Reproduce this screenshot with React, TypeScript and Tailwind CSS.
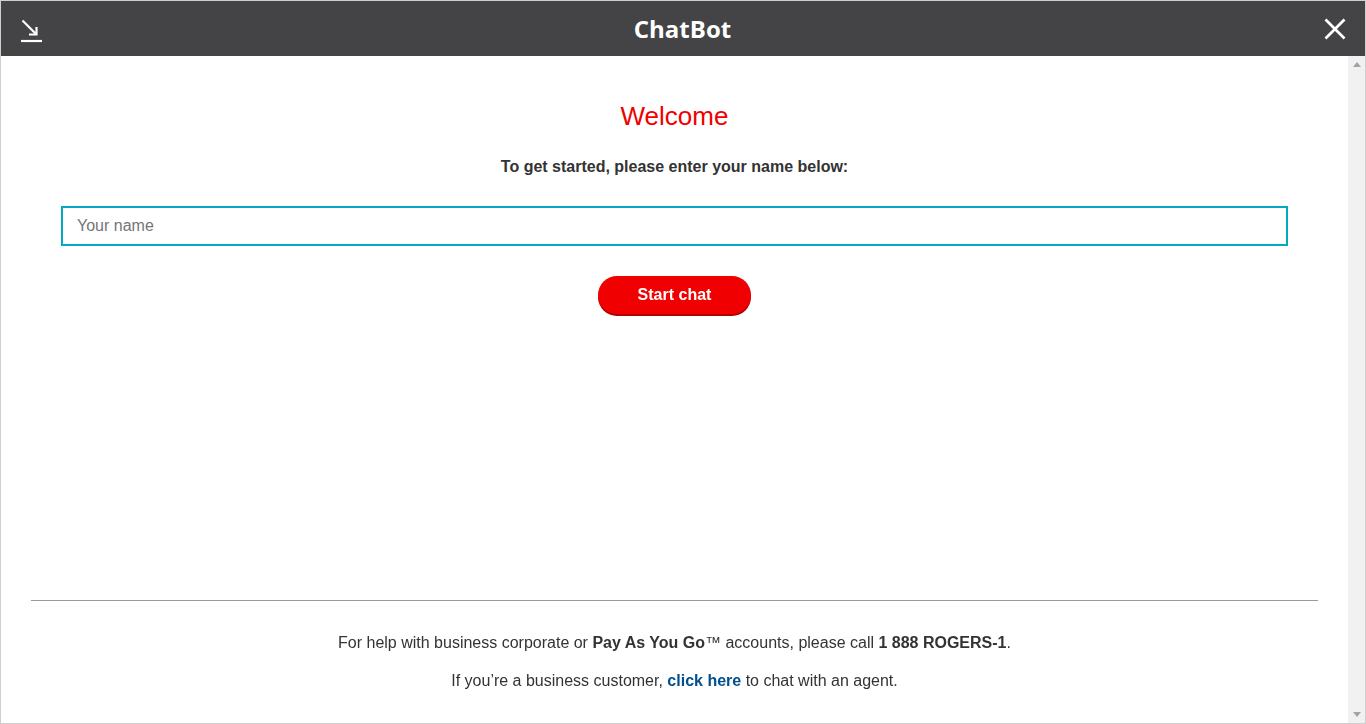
import React from 'react';

function MinimizeIcon() {
  return (
    <svg width="22" height="24" viewBox="0 0 22 24" fill="none" stroke="white" strokeWidth="2.2">
      <path d="M1.5 1.5 L15 15" />
      <path d="M8 15.5 H15.5 V8" />
      <path d="M0 22 H21" />
    </svg>
  );
}

function CloseIcon() {
  return (
    <svg width="22" height="22" viewBox="0 0 22 22" fill="none" stroke="white" strokeWidth="2.6">
      <path d="M1.5 1.5 L20.5 20.5" />
      <path d="M20.5 1.5 L1.5 20.5" />
    </svg>
  );
}

export default function App() {
  return (
    <div className="w-full h-[724px] flex flex-col border border-[#cfcfcf] bg-white font-['Liberation_Sans',Arial,sans-serif] text-[#333333] overflow-hidden">
      <header className="h-[55px] shrink-0 bg-[#444446] flex items-center justify-between pl-[20px] pr-[19px]">
        <button className="w-[22px] h-[24px] flex items-center justify-center mt-[4px]">
          <MinimizeIcon />
        </button>
        <h1 className="font-['Open_Sans',sans-serif] font-bold text-[24px] text-white leading-none ml-[-2px]">ChatBot</h1>
        <button className="w-[22px] h-[22px] flex items-center justify-center">
          <CloseIcon />
        </button>
      </header>

      <div className="flex-1 flex min-h-0">
        <main className="flex-1 flex flex-col">
          <div className="flex flex-col items-center px-[60px] pt-[45px]">
            <h2 className="text-[26px] leading-[30px] text-[#f00000]">Welcome</h2>
            <p className="mt-[26px] text-[16px] leading-[20px] font-bold text-[#333333]">
              To get started, please enter your name below:
            </p>
            <input
              autoFocus
              type="text"
              placeholder="Your name"
              className="mt-[29px] w-full h-[40px] border-2 border-[#00a9c4] px-[14px] text-[16px] text-[#333] placeholder:text-[#757575] outline-none caret-black"
            />
            <button className="mt-[30px] w-[153px] h-[38px] rounded-full bg-[#f00000] text-white font-bold text-[16px] shadow-[0_2px_0_#b30000]">
              Start chat
            </button>
          </div>

          <footer className="mt-auto mx-[30px] border-t border-[#9a9a9a] pt-[32px] pb-[32px] flex flex-col items-center gap-[18px] text-[16px] leading-[20px]">
            <p>
              For help with business corporate or <b>Pay As You Go</b>™ accounts, please call <b>1 888 ROGERS-1</b>.
            </p>
            <p>
              If you’re a business customer, <a href="#" className="font-bold text-[#00508f]">click here</a> to chat with an agent.
            </p>
          </footer>
        </main>

        <div className="w-[17px] shrink-0 bg-[#f1f1f1] flex flex-col items-center justify-between py-[6px]">
          <svg width="8" height="5" viewBox="0 0 8 5"><path d="M0 5 L4 0 L8 5 Z" fill="#a3a3a3" /></svg>
          <svg width="8" height="5" viewBox="0 0 8 5"><path d="M0 0 L4 5 L8 0 Z" fill="#a3a3a3" /></svg>
        </div>
      </div>
    </div>
  );
}
